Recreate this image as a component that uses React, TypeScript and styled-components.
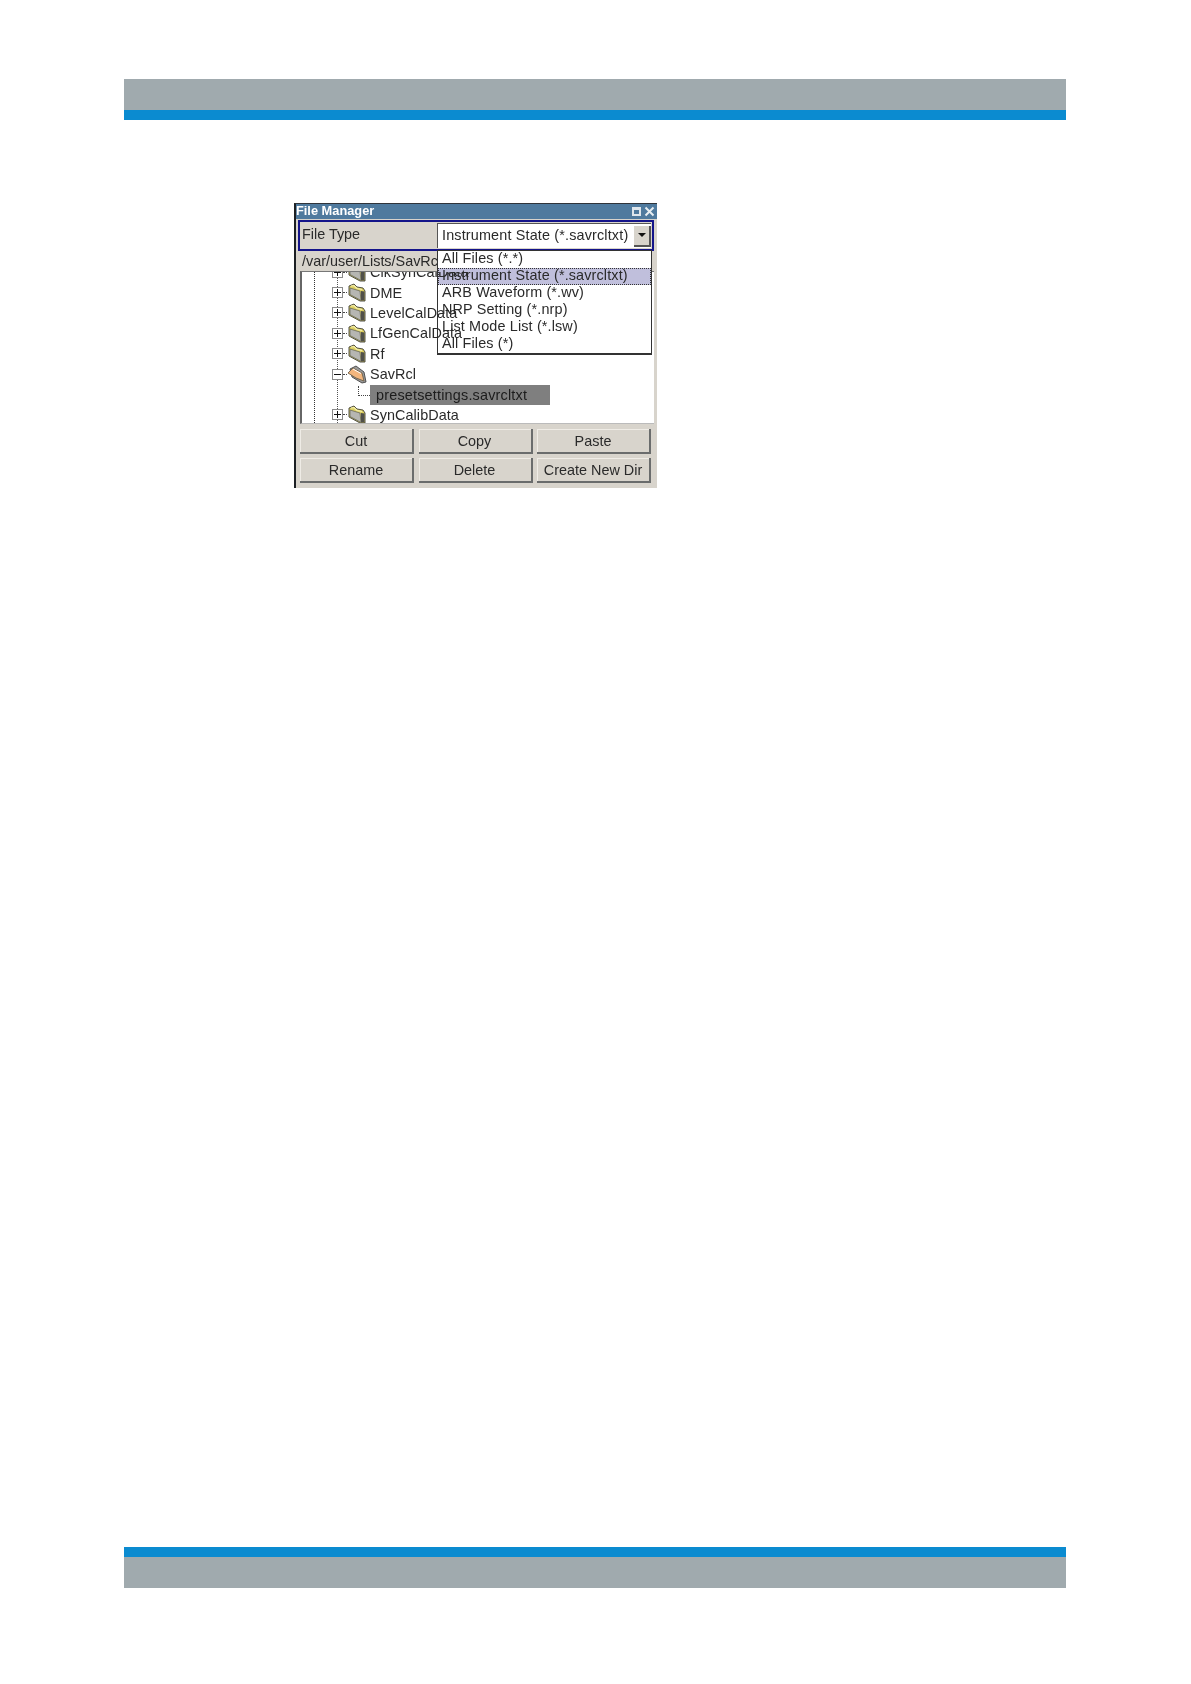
import styled, { createGlobalStyle } from "styled-components";

const GlobalStyle = createGlobalStyle`
  html, body {
    margin: 0;
    padding: 0;
    background: #fff;
  }
  body {
    font-family: "Liberation Sans", Arial, sans-serif;
  }
`;

const Page = styled.div`
  width: 1191px;
  height: 1684px;
  box-sizing: border-box;
  padding: 79px 125px 96px 124px;
  display: flex;
  flex-direction: column;
`;

const Band = styled.div`
  height: 31px;
  background: #a0aaae;
`;

const Stripe = styled.div`
  height: 10px;
  background: #0b8bd0;
`;

const Content = styled.main`
  flex: 1;
  padding: 83px 0 0 170px;
`;

const Window = styled.section`
  position: relative;
  width: 363px;
  height: 285px;
  box-sizing: border-box;
  background: #d8d4cc;
  border-left: 2px solid #1c2024;
  border-top: 1px solid #30343a;
  color: #2a2a2a;
  font-size: 14.4px;
  filter: blur(0.4px);
`;

const TitleBar = styled.header`
  height: 15px;
  box-sizing: border-box;
  padding: 0 2px 2px 0;
  display: flex;
  align-items: center;
  justify-content: space-between;
  background: #4f7a9e;
  color: #fff;
  font-size: 12.8px;
  font-weight: 700;
`;

const TitleIcons = styled.div`
  display: flex;
  gap: 2px;
  margin-bottom: -2px;
`;

const FileTypeRow = styled.div`
  height: 31px;
  box-sizing: border-box;
  margin: 1px 3px 0 2px;
  display: flex;
  border: 2px solid #14148a;
  background: #d8d4cc;
`;

const FieldLabel = styled.div`
  width: 137px;
  padding: 0 0 3px 2px;
  display: flex;
  align-items: center;
  box-sizing: border-box;
`;

const SelectBox = styled.div`
  flex: 1;
  margin: 1px 1px 1px 0;
  padding-left: 4px;
  display: flex;
  align-items: center;
  justify-content: space-between;
  background: #fff;
  border-left: 1px solid #555;
  border-top: 1px solid #555;
  letter-spacing: 0.16px;
`;

const SelectValue = styled.span`
  margin-bottom: 3px;
`;

const SelectButton = styled.div`
  width: 17px;
  height: 21px;
  display: flex;
  align-items: center;
  justify-content: center;
  background: #d8d4cc;
  border-right: 2px solid #555;
  border-bottom: 2px solid #555;
  box-sizing: border-box;
`;

const Arrow = styled.span`
  width: 0;
  height: 0;
  border-left: 4px solid transparent;
  border-right: 4px solid transparent;
  border-top: 4px solid #111;
`;

const PathRow = styled.div`
  height: 20px;
  padding-left: 6px;
  line-height: 20px;
  white-space: nowrap;
  overflow: hidden;
`;

const Tree = styled.div`
  position: relative;
  height: 153px;
  margin: 0 3px 0 4px;
  overflow: hidden;
  background: #fff;
  border-left: 2px solid #666;
  border-top: 1px solid #777;
  border-bottom: 1px solid #bbb;
  box-sizing: border-box;
  &::before {
    content: "";
    position: absolute;
    left: 12px;
    top: 0;
    bottom: 0;
    border-left: 1px dotted #333;
  }
  &::after {
    content: "";
    position: absolute;
    left: 35px;
    top: 0;
    bottom: 0;
    border-left: 1px dotted #555;
  }
`;

const TreeBody = styled.ul`
  position: relative;
  z-index: 1;
  list-style: none;
  margin: -10px 0 0;
  padding: 0 0 0 30px;
`;

const TreeRow = styled.li`
  height: 20.4px;
  display: flex;
  align-items: center;
`;

const Expander = styled.span`
  width: 11px;
  height: 11px;
  box-sizing: border-box;
  border: 1px solid #8a8a8a;
  background: #fff;
  display: flex;
  align-items: center;
  justify-content: center;
  flex: none;
  svg {
    display: block;
  }
`;

const Connector = styled.span`
  width: 4px;
  border-top: 1px dotted #444;
  margin-right: 0;
  flex: none;
`;

const RowName = styled.span`
  margin-left: 3px;
  white-space: nowrap;
  letter-spacing: 0.08px;
`;

const FileRow = styled.li`
  height: 20.4px;
  display: flex;
  align-items: center;
  padding-left: 26px;
`;

const FileElbow = styled.span`
  width: 11px;
  height: 9px;
  margin-top: -7px;
  border-left: 1px dotted #444;
  border-bottom: 1px dotted #444;
  flex: none;
`;

const SelectedFile = styled.span`
  width: 180px;
  height: 20px;
  padding-left: 6px;
  box-sizing: border-box;
  line-height: 20px;
  background: #7f7f7f;
  color: #1c1c1c;
  white-space: nowrap;
  letter-spacing: 0.2px;
`;

const ButtonGrid = styled.div`
  margin: 5px 4px 0 4px;
  display: grid;
  grid-template-columns: 114px 114px 114px;
  grid-auto-rows: 25px;
  column-gap: 4.5px;
  row-gap: 4px;
`;

const ActionButton = styled.button`
  padding: 0;
  font: inherit;
  color: #2a2a2a;
  background: #d8d4cc;
  border: none;
  border-right: 2px solid #6a6c6c;
  border-bottom: 2px solid #6a6c6c;
  box-shadow: inset 1px 1px 0 #efece6;
`;

const DropDown = styled.ul`
  position: absolute;
  left: 141px;
  top: 46px;
  width: 215px;
  height: 105px;
  box-sizing: border-box;
  list-style: none;
  margin: 0;
  padding: 0;
  background: #fff;
  border: 1px solid #333;
  border-bottom-width: 2px;
  letter-spacing: 0.14px;
`;

const DropItem = styled.li<{ $active?: boolean }>`
  height: 17px;
  line-height: 15px;
  padding-left: 4px;
  white-space: nowrap;
  box-sizing: border-box;
  background: ${(p) => (p.$active ? "#c0bfdc" : "transparent")};
  outline: ${(p) => (p.$active ? "1px dotted #333" : "none")};
  outline-offset: -1px;
`;

const Folder = ({ open }: { open?: boolean }) => (
  <svg width="20" height="19" viewBox="0 0 20 19">
    {open ? (
      <>
        <path d="M3 4 L9 1 L17 7 L19 17 L15 18 L5 12 Z" fill="#9a9a9a" stroke="#444" strokeWidth="0.9" />
        <path d="M1 8 L6 3 L15 8 L17 16 L9 13 Z" fill="#f3b67e" stroke="#6d6048" strokeWidth="0.9" />
        <path d="M6 4 L14 8.5" stroke="#fff" strokeWidth="1" />
      </>
    ) : (
      <>
        <path d="M2 3 L7 1 L10 4 L16 5 L18 8 L18 18 L13 18 L2 12 Z" fill="#dccf62" stroke="#3e3e34" strokeWidth="0.9" />
        <path d="M3 5 L13 8 L14 17.5 L3 11.5 Z" fill="#b6b6b2" stroke="#6a6a5a" strokeWidth="0.8" />
        <path d="M4 3 L7 2.5 L10 5.5 L15 6.5" fill="none" stroke="#f6f0b0" strokeWidth="1.1" />
        <path d="M14 8 L17.5 8.5 L17.5 17.5 L14 17.5 Z" fill="#50504a" />
      </>
    )}
  </svg>
);

const ExpandBox = ({ open }: { open?: boolean }) => (
  <Expander>
    <svg width="7" height="7" viewBox="0 0 7 7">
      <path d={open ? "M0 3.5H7" : "M0 3.5H7M3.5 0V7"} stroke="#111" strokeWidth="1" />
    </svg>
  </Expander>
);

const folders = [
  { name: "ClkSynCalData" },
  { name: "DME" },
  { name: "LevelCalData" },
  { name: "LfGenCalData" },
  { name: "Rf" },
  { name: "SavRcl", open: true },
];

const fileTypes = [
  "All Files (*.*)",
  "Instrument State (*.savrcltxt)",
  "ARB Waveform (*.wv)",
  "NRP Setting (*.nrp)",
  "List Mode List (*.lsw)",
  "All Files (*)",
];

const buttons = ["Cut", "Copy", "Paste", "Rename", "Delete", "Create New Dir"];

const FolderRow = ({ name, open }: { name: string; open?: boolean }) => (
  <TreeRow>
    <ExpandBox open={open} />
    <Connector />
    <Folder open={open} />
    <RowName>{name}</RowName>
  </TreeRow>
);

export default function App() {
  return (
    <Page>
      <GlobalStyle />
      <Band />
      <Stripe />
      <Content>
        <Window>
          <TitleBar>
            File Manager
            <TitleIcons>
              <svg width="11" height="11" viewBox="0 0 11 11">
                <path d="M1 1H10V10H1Z M3 4V8H8V4Z" fill="#dfe6ec" fillRule="evenodd" />
              </svg>
              <svg width="11" height="11" viewBox="0 0 11 11">
                <path d="M1.5 1.5L9.5 9.5M9.5 1.5L1.5 9.5" stroke="#e8eef2" strokeWidth="2" />
              </svg>
            </TitleIcons>
          </TitleBar>
          <FileTypeRow>
            <FieldLabel>File Type</FieldLabel>
            <SelectBox>
              <SelectValue>Instrument State (*.savrcltxt)</SelectValue>
              <SelectButton>
                <Arrow />
              </SelectButton>
            </SelectBox>
          </FileTypeRow>
          <PathRow>/var/user/Lists/SavRcl</PathRow>
          <Tree>
            <TreeBody>
              {folders.map((f) => (
                <FolderRow key={f.name} name={f.name} open={f.open} />
              ))}
              <FileRow>
                <FileElbow />
                <SelectedFile>presetsettings.savrcltxt</SelectedFile>
              </FileRow>
              <FolderRow name="SynCalibData" />
            </TreeBody>
          </Tree>
          <ButtonGrid>
            {buttons.map((b) => (
              <ActionButton key={b}>{b}</ActionButton>
            ))}
          </ButtonGrid>
          <DropDown>
            {fileTypes.map((t, i) => (
              <DropItem key={t} $active={i === 1}>
                {t}
              </DropItem>
            ))}
          </DropDown>
        </Window>
      </Content>
      <Stripe />
      <Band />
    </Page>
  );
}
